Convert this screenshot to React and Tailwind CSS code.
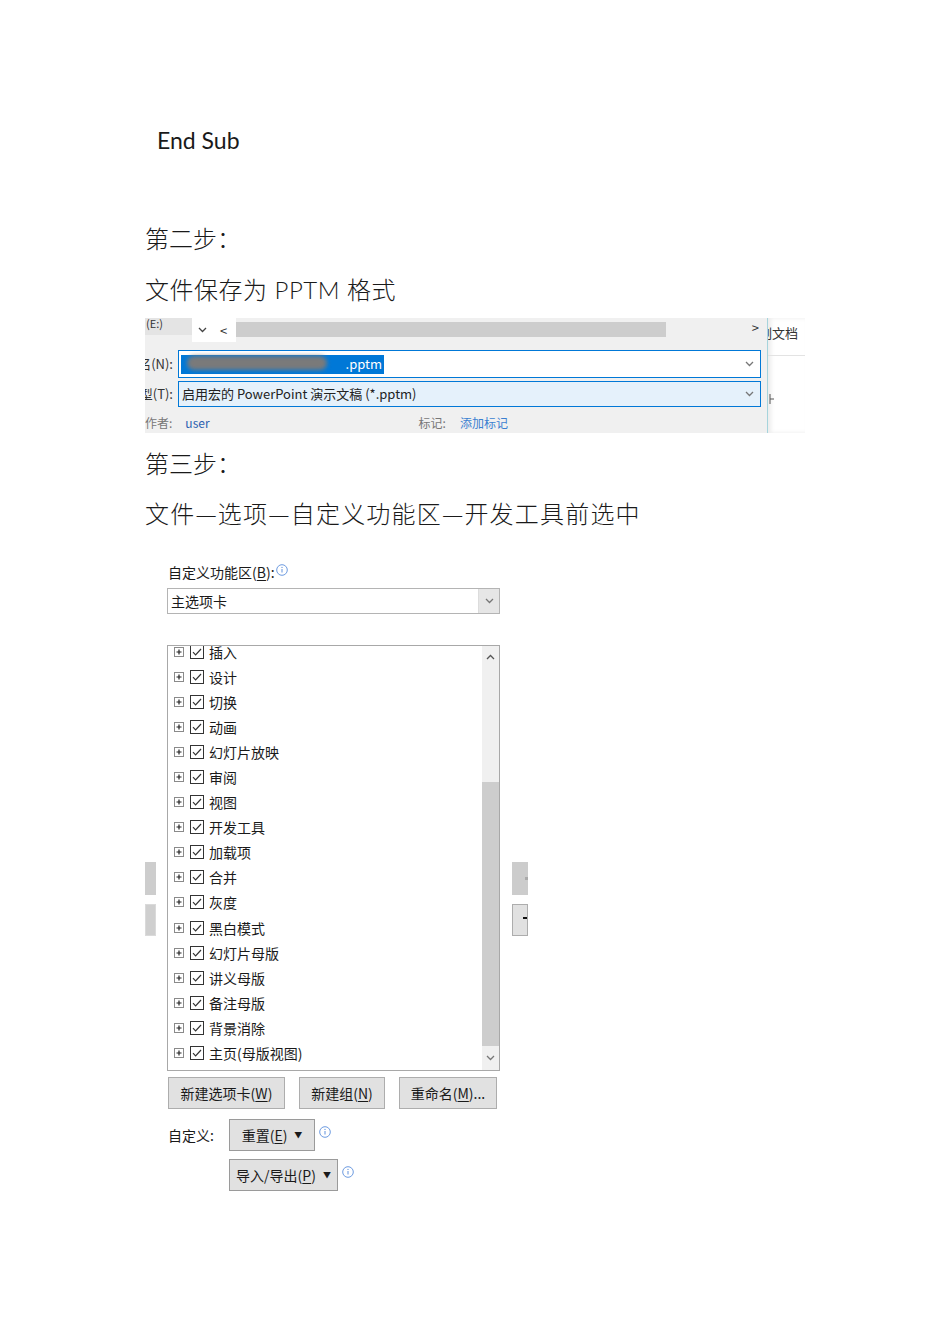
import React from "react";

const cjk = "font-['Noto_Sans_CJK_SC','Noto_Sans',sans-serif]";
const doc = "font-['Lato','Noto_Sans_CJK_SC',sans-serif]";

const tabs = [
  "插入",
  "设计",
  "切换",
  "动画",
  "幻灯片放映",
  "审阅",
  "视图",
  "开发工具",
  "加载项",
  "合并",
  "灰度",
  "黑白模式",
  "幻灯片母版",
  "讲义母版",
  "备注母版",
  "背景消除",
  "主页(母版视图)",
];

function PlusBox() {
  return (
    <svg width="10" height="10" viewBox="0 0 10 10" className="shrink-0">
      <rect x="0.5" y="0.5" width="9" height="9" fill="#fff" stroke="#8a8a8a" />
      <path d="M2.5 5h5M5 2.5v5" stroke="#222" strokeWidth="1.2" />
    </svg>
  );
}

function CheckBox() {
  return (
    <svg width="14" height="14" viewBox="0 0 14 14" className="shrink-0">
      <rect x="0.5" y="0.5" width="13" height="13" fill="#fff" stroke="#333" />
      <path d="M3 7.2l2.6 2.6L11 4" fill="none" stroke="#333" strokeWidth="1.2" />
    </svg>
  );
}

function Info() {
  return (
    <svg width="12" height="12" viewBox="0 0 12 12" className="shrink-0">
      <circle cx="6" cy="6" r="5.3" fill="#fff" stroke="#6d9be0" />
      <path d="M6 5v3.6" stroke="#6d9be0" strokeWidth="1.1" />
      <circle cx="6" cy="3.4" r="0.7" fill="#6d9be0" />
    </svg>
  );
}

function Chevron({ up, className = "" }) {
  return (
    <svg width="9" height="6" viewBox="0 0 9 6" className={className}>
      <path
        d={up ? "M1 5l3.5-3.5L8 5" : "M1 1l3.5 3.5L8 1"}
        fill="none"
        stroke="currentColor"
        strokeWidth="1.3"
      />
    </svg>
  );
}

function U({ children }) {
  return <span className="underline underline-offset-2">{children}</span>;
}

function Caret() {
  return <span className="ml-[7px] text-[8px]">▼</span>;
}

function SaveDialog() {
  return (
    <div className={`${cjk} relative mt-[10px] flex h-[115px] w-[660px] overflow-hidden bg-white`}>
      <div className="flex w-[622px] flex-col bg-[#f0f0f0]">
        {/* top breadcrumb row */}
        <div className="flex h-[24px] items-start">
          <div className="h-[17px] w-[47px] bg-[#e4e4e4] pl-[1px] text-[11px] leading-[10px] text-[#333]">(E:)</div>
          <div className="flex h-[24px] w-[44px] items-center bg-white pl-[6px] text-[#333]">
            <Chevron className="text-[#444]" />
            <span className="ml-[13px] text-[13px] leading-none">&lt;</span>
          </div>
          <div className="mt-[4px] h-[15px] w-[430px] bg-[#cdcdcd]" />
          <div className="ml-auto mr-[8px] mt-[3px] text-[13px] leading-none text-[#333]">&gt;</div>
        </div>
        {/* file name */}
        <div className="mt-[8px] flex h-[28px] items-center">
          <div className="mr-[5px] flex w-[28px] justify-end overflow-hidden whitespace-nowrap text-[13px] text-[#333]">
            文件名(N):
          </div>
          <div className="flex h-[28px] w-[583px] items-center border border-[#0078d7] bg-white pl-[2px]">
            <div className="relative flex h-[19px] w-[203px] items-center justify-end bg-[#0078d7] pr-[2px] text-[13px] text-white">
              <div className="absolute left-[6px] top-[1px] h-[14px] w-[140px] rounded-full bg-[#7a7a7a] blur-[2px]" />
              <span className="relative">.pptm</span>
            </div>
            <Chevron className="ml-auto mr-[6px] text-[#777]" />
          </div>
        </div>
        {/* file type */}
        <div className="mt-[3px] flex h-[26px] items-center">
          <div className="mr-[5px] flex w-[28px] justify-end overflow-hidden whitespace-nowrap text-[13px] text-[#333]">
            保存类型(T):
          </div>
          <div className="flex h-[26px] w-[583px] items-center border border-[#0078d7] bg-[#e5f1fb] pl-[3px] text-[13px] text-[#222]">
            启用宏的 PowerPoint 演示文稿 (*.pptm)
            <Chevron className="ml-auto mr-[6px] text-[#777]" />
          </div>
        </div>
        {/* meta */}
        <div className="mt-[10px] flex items-center text-[12px] leading-none">
          <span className="text-[#777]">作者:</span>
          <span className="ml-[13px] text-[#2d62b0]">user</span>
          <span className="ml-[209px] text-[#777]">标记:</span>
          <span className="ml-[14px] text-[#3b7fd0]">添加标记</span>
        </div>
      </div>
      <div className="w-[1px] bg-[#a6d4dc]" />
      <div className="flex flex-1 flex-col shadow-[inset_3px_0_4px_rgba(0,0,0,0.08)]">
        <div className="mt-[5px] h-[24px] overflow-hidden whitespace-nowrap text-[13px] text-[#333]">
          <span className="-ml-[9px]">副文档</span>
        </div>
        <div className="mt-[8px] h-px bg-[#e3e3e3]" />
        <div className="mt-[38px] flex items-center pl-[1px]">
          <svg width="6" height="10" viewBox="0 0 6 10">
            <path d="M1 0v10M1 5h4" stroke="#555" strokeWidth="1" />
          </svg>
        </div>
      </div>
    </div>
  );
}

function Ribbon() {
  return (
    <div className={`${cjk} mt-[31px] text-[#1a1a1a]`}>
      <div className="ml-[23px] flex h-[20px] items-center text-[14px]">
        自定义功能区(<U>B</U>):
        <span className="ml-[1px] -mt-[4px]">
          <Info />
        </span>
      </div>
      <div className="ml-[22px] mt-[6px] flex h-[26px] w-[333px] border border-[#b4b4b4] bg-white">
        <div className="flex flex-1 items-center pl-[3px] text-[14px]">主选项卡</div>
        <div className="flex w-[21px] items-center justify-center border-l border-[#dcdcdc] bg-[#e6e6e6] text-[#777]">
          <Chevron />
        </div>
      </div>

      <div className="mt-[31px] flex">
        <div className="flex w-[11px] flex-col pt-[217px]">
          <div className="h-[33px] bg-[#cdcdcd]" />
          <div className="mt-[9px] h-[32px] border border-[#dadada] bg-[#cfcfcf]" />
        </div>
        <div className="ml-[11px] flex h-[426px] w-[333px] overflow-hidden border border-[#a8a8a8] bg-white">
          <div className="flex-1 overflow-hidden">
            <div className="-mt-[7px]">
              {tabs.map((t) => (
                <div key={t} className="flex h-[25.1px] items-center pl-[6px] text-[14px] leading-none">
                  <PlusBox />
                  <span className="ml-[6px]">
                    <CheckBox />
                  </span>
                  <span className="ml-[5px]">{t}</span>
                </div>
              ))}
            </div>
          </div>
          <div className="flex w-[17px] flex-col bg-[#f0f0f0]">
            <div className="flex h-[22px] items-center justify-center text-[#555]">
              <Chevron up />
            </div>
            <div className="mt-[114px] h-[264px] bg-[#cdcdcd]" />
            <div className="flex flex-1 items-center justify-center text-[#777]">
              <Chevron />
            </div>
          </div>
        </div>
        <div className="ml-[12px] flex w-[16px] flex-col pt-[217px]">
          <div className="relative h-[33px] bg-[#cccccc]">
            <div className="absolute right-0 top-[15px] h-[3px] w-[3px] bg-[#aaa]" />
          </div>
          <div className="relative mt-[9px] h-[32px] border border-[#adadad] bg-[#e1e1e1]">
            <div className="absolute right-0 top-[12px] h-[2px] w-[4px] bg-[#111]" />
          </div>
        </div>
      </div>

      <div className="ml-[23px] mt-[6px] flex h-[32px] gap-[14px] text-[14px]">
        <button className="w-[117px] border border-[#adadad] bg-[#e1e1e1]">
          新建选项卡(<U>W</U>)
        </button>
        <button className="w-[86px] border border-[#adadad] bg-[#e1e1e1]">
          新建组(<U>N</U>)
        </button>
        <button className="w-[98px] border border-[#adadad] bg-[#e1e1e1]">
          重命名(<U>M</U>)...
        </button>
      </div>

      <div className="ml-[23px] mt-[10px] flex h-[32px] items-center text-[14px]">
        <span className="w-[61px]">自定义:</span>
        <button className="flex h-[32px] w-[86px] items-center justify-center border border-[#9a9a9a] bg-[#e1e1e1]">
          重置(<U>E</U>)
          <Caret />
        </button>
        <span className="ml-[4px] -mt-[7px]">
          <Info />
        </span>
      </div>

      <div className="ml-[84px] mt-[8px] flex h-[32px] items-center text-[14px]">
        <button className="flex h-[32px] w-[109px] items-center justify-center border border-[#9a9a9a] bg-[#e1e1e1]">
          导入/导出(<U>P</U>)
          <Caret />
        </button>
        <span className="ml-[4px] -mt-[7px]">
          <Info />
        </span>
      </div>
    </div>
  );
}

export default function App() {
  return (
    <div className="min-h-[1344px] w-[950px] bg-white pl-[145px] pt-[125px] text-[#1a1a1a]">
      <div className={`${doc} ml-[12px] h-[30px] text-[23px] leading-[30px]`}>End Sub</div>

      <div className={`${cjk} mt-[65px] h-[36px] text-[24px] font-light leading-[36px]`}>第二步：</div>
      <div className={`${doc} mt-[16px] h-[36px] text-[24px] font-light leading-[36px] tracking-[0.5px]`}>
        文件保存为 PPTM 格式
      </div>

      <SaveDialog />

      <div className={`${cjk} mt-[12px] h-[36px] text-[24px] font-light leading-[36px]`}>第三步：</div>
      <div className={`${cjk} mt-[14px] h-[36px] text-[24px] font-light leading-[36px] tracking-[1.2px]`}>
        文件—选项—自定义功能区—开发工具前选中
      </div>

      <Ribbon />
    </div>
  );
}
